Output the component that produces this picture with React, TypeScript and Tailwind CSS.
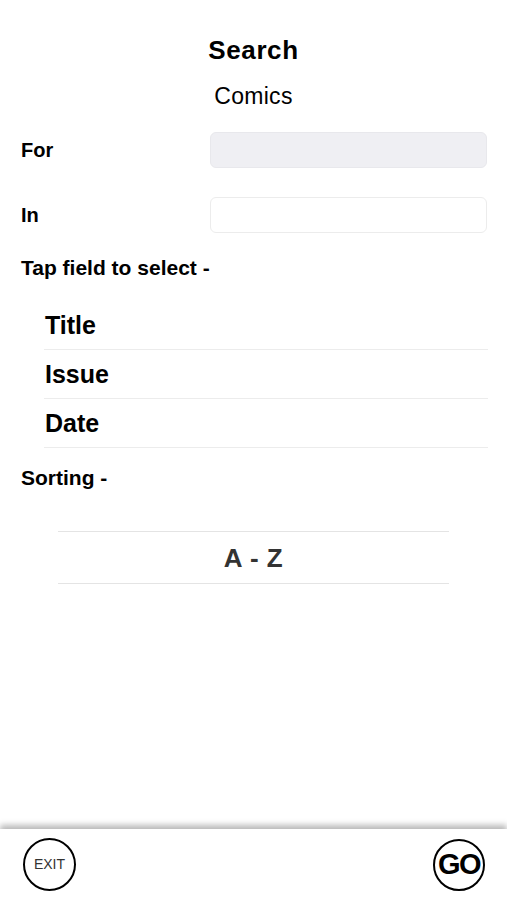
import React from "react";

export default function App() {
  const font = { fontFamily: "'Liberation Sans', Arial, sans-serif" };
  return (
    <div className="w-[507px] h-[900px] bg-white flex flex-col overflow-hidden text-black" style={font}>
      <div className="flex-1 flex flex-col">
        <div className="mt-[35px] text-center text-[26px] leading-[30px] font-bold tracking-[0.6px]">Search</div>
        <div className="mt-[18px] text-center text-[23px] leading-[26px] font-normal tracking-[0.3px]">Comics</div>

        <div className="mt-[23px] flex items-center pl-[21px] pr-[20px] h-[36px]">
          <div className="w-[189px] text-[20px] leading-[24px] font-bold">For</div>
          <div className="flex-1 h-[36px] rounded-[6px] bg-[#efeff3] border border-[#e8e8ec]"></div>
        </div>
        <div className="mt-[29px] flex items-center pl-[21px] pr-[20px] h-[36px]">
          <div className="w-[189px] text-[20px] leading-[24px] font-bold">In</div>
          <div className="flex-1 h-[36px] rounded-[6px] bg-white border border-[#ececec]"></div>
        </div>

        <div className="mt-[23px] pl-[21px] text-[21px] leading-[24px] font-bold">Tap field to select -</div>

        <div className="mt-[20.5px] ml-[44px] mr-[19px] flex flex-col">
          {["Title", "Issue", "Date"].map((t) => (
            <div key={t} className="h-[49px] flex items-center border-b border-[#ececec] pl-[1px] text-[25px] leading-[30px] font-bold">
              {t}
            </div>
          ))}
        </div>

        <div className="mt-[18.5px] pl-[21px] text-[21px] leading-[24px] font-bold">Sorting -</div>

        <div className="mt-[41px] mx-auto w-[391px] h-[53px] border-t border-b border-[#e4e4e4] flex items-center justify-center text-[26px] leading-[30px] font-bold text-[#333333] tracking-[0.5px]">
          A - Z
        </div>
      </div>

      <div className="h-[71px] bg-white shadow-[0_-4px_6px_rgba(0,0,0,0.28)] flex items-center justify-between pl-[23px] pr-[22px] relative">
        <div className="w-[53px] h-[53px] rounded-full border-2 border-black flex items-center justify-center text-[14px] text-[#333]">
          EXIT
        </div>
        <div className="w-[52px] h-[52px] rounded-full border-[2.5px] border-black flex items-center justify-center text-[29px] font-bold tracking-[-1.5px]">
          GO
        </div>
      </div>
    </div>
  );
}
